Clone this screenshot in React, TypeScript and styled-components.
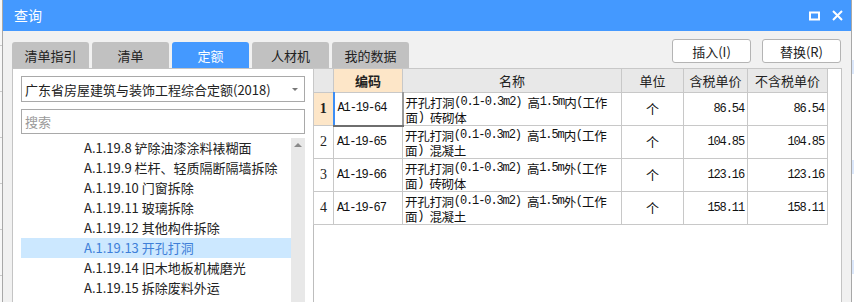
import styled, { createGlobalStyle } from 'styled-components';

type Row = {
	no: number;
	code: string;
	name: [string, string];
	unit: string;
	price: string;
	priceNoTax: string;
};

const rows: Row[] = [
	{ no: 1, code: 'A1-19-64', name: ['开孔打洞(0.1-0.3m2) 高1.5m内(工作', '面) 砖砌体'], unit: '个', price: '86.54', priceNoTax: '86.54' },
	{ no: 2, code: 'A1-19-65', name: ['开孔打洞(0.1-0.3m2) 高1.5m内(工作', '面) 混凝土'], unit: '个', price: '104.85', priceNoTax: '104.85' },
	{ no: 3, code: 'A1-19-66', name: ['开孔打洞(0.1-0.3m2) 高1.5m外(工作', '面) 砖砌体'], unit: '个', price: '123.16', priceNoTax: '123.16' },
	{ no: 4, code: 'A1-19-67', name: ['开孔打洞(0.1-0.3m2) 高1.5m外(工作', '面) 混凝土'], unit: '个', price: '158.11', priceNoTax: '158.11' },
];

const tabs = ['清单指引', '清单', '定额', '人材机', '我的数据'];

const treeItems = [
	'A.1.19.8 铲除油漆涂料裱糊面',
	'A.1.19.9 栏杆、轻质隔断隔墙拆除',
	'A.1.19.10 门窗拆除',
	'A.1.19.11 玻璃拆除',
	'A.1.19.12 其他构件拆除',
	'A.1.19.13 开孔打洞',
	'A.1.19.14 旧木地板机械磨光',
	'A.1.19.15 拆除废料外运',
];

const GlobalStyle = createGlobalStyle`
	html, body {
		margin: 0;
		padding: 0;
		background: #ffffff;
	}
	* {
		box-sizing: border-box;
	}
`;

const Screen = styled.div`
	width: 854px;
	height: 302px;
	overflow: hidden;
	display: flex;
	font-family: 'Noto Sans CJK SC', 'Noto Sans', sans-serif;
	font-size: 13px;
	color: #222;
`;

const BackEdge = styled.div<{ $side: 'left' | 'right' }>`
	width: 3px;
	flex-shrink: 0;
	background: ${(p) =>
		p.$side === 'left'
			? 'repeating-linear-gradient(#f7f7f7 0 45px, #c9c9c9 45px 46px)'
			: 'repeating-linear-gradient(#ffffff 0 60px, #dce8fb 60px 74px, #ffffff 74px 100px)'};
	border-${(p) => (p.$side === 'left' ? 'right' : 'left')}: 1px solid #a8a8a8;
`;

const Dialog = styled.div`
	flex: 1;
	display: flex;
	flex-direction: column;
	background: #f1f1f1;
`;

const TitleBar = styled.div`
	height: 31px;
	flex-shrink: 0;
	background: #4499ff;
	display: flex;
	align-items: center;
	padding: 0 8px 0 11px;
	color: #fff;
	font-size: 14px;
`;

const Title = styled.span`
	flex: 1;
	padding-bottom: 1px;
`;

const TitleButtons = styled.div`
	display: flex;
	gap: 12px;
	align-items: center;
`;

const Body = styled.div`
	flex: 1;
	display: flex;
	flex-direction: column;
	padding: 0 6px 0 9px;
	min-height: 0;
`;

const Toolbar = styled.div`
	height: 37px;
	display: flex;
	justify-content: space-between;
	flex-shrink: 0;
`;

const Tabs = styled.div`
	display: flex;
	gap: 3px;
	align-items: flex-end;
`;

const Tab = styled.div<{ $active?: boolean }>`
	width: 77px;
	height: 26px;
	display: flex;
	align-items: center;
	justify-content: center;
	border-radius: 3px 3px 0 0;
	background: ${(p) => (p.$active ? '#4499ff' : '#c1c1c1')};
	color: ${(p) => (p.$active ? '#fff' : '#222')};
	font-size: 13px;
`;

const Actions = styled.div`
	display: flex;
	gap: 11px;
	padding: 8px 4px 0 0;
`;

const ActionButton = styled.button`
	width: 79px;
	height: 24px;
	border: 1px solid #b4b4b4;
	border-radius: 3px;
	background: #fff;
	font-family: 'Noto Sans CJK SC', 'Noto Sans', sans-serif;
	font-size: 13px;
	color: #222;
	padding: 0;
`;

const Content = styled.div`
	flex: 1;
	display: flex;
	background: #fff;
	border-left: 1px solid #c4c4c4;
	border-top: 1px solid #c4c4c4;
	margin-right: 3px;
	min-height: 0;
`;

const LeftPanel = styled.div`
	width: 300px;
	flex-shrink: 0;
	display: flex;
	flex-direction: column;
	padding: 7px 8px 0 8px;
	gap: 7px;
`;

const Select = styled.div`
	height: 26px;
	border: 1px solid #a9a9a9;
	display: flex;
	align-items: center;
	padding: 0 6px 0 3px;
	font-size: 13px;
	flex-shrink: 0;
`;

const SelectText = styled.span`
	flex: 1;
`;

const Caret = styled.span`
	width: 0;
	height: 0;
	border-left: 3px solid transparent;
	border-right: 3px solid transparent;
	border-top: 3px solid #777;
`;

const Search = styled.div`
	height: 25px;
	border: 1px solid #a9a9a9;
	display: flex;
	align-items: center;
	padding: 0 3px;
	color: #9a9a9a;
	flex-shrink: 0;
`;

const Tree = styled.div`
	flex: 1;
	display: flex;
	margin-top: -3px;
	min-height: 0;
`;

const TreeList = styled.div`
	flex: 1;
	display: flex;
	flex-direction: column;
`;

const TreeItem = styled.div<{ $selected?: boolean }>`
	height: 20px;
	line-height: 20px;
	padding-left: 63px;
	flex-shrink: 0;
	white-space: nowrap;
	background: ${(p) => (p.$selected ? '#cce8ff' : 'transparent')};
	color: ${(p) => (p.$selected ? '#3f7fd8' : '#222')};
`;

const ScrollTrack = styled.div`
	width: 14px;
	background: #e8e8e8;
	display: flex;
	justify-content: center;
	padding-top: 5px;
`;

const ScrollArrow = styled.span`
	width: 0;
	height: 0;
	border-left: 4px solid transparent;
	border-right: 4px solid transparent;
	border-bottom: 4px solid #8a8a8a;
`;

const RightPanel = styled.div`
	flex: 1;
	display: flex;
	border-left: 1px solid #bdbdbd;
	border-right: 1px solid #c4c4c4;
	align-items: flex-start;
`;

const Table = styled.table`
	border-collapse: collapse;
	table-layout: fixed;
	width: 514px;
	margin-top: -1px;
	margin-left: -1px;
`;

const HeadCell = styled.th<{ $highlight?: boolean; $w: number }>`
	width: ${(p) => p.$w}px;
	height: 24px;
	padding: 0;
	background: ${(p) => (p.$highlight ? '#fde6c8' : '#e8e8e8')};
	border: 1px solid #c8c8c8;
	font-weight: ${(p) => (p.$highlight ? 700 : 400)};
	font-size: 13px;
	color: #222;
	text-align: center;
`;

const NumCell = styled.td<{ $current?: boolean }>`
	height: 33px;
	padding: 0;
	text-align: center;
	border: 1px solid #c8c8c8;
	background: ${(p) => (p.$current ? '#fde6c8' : '#fff')};
	font-family: 'Liberation Serif', serif;
	font-weight: ${(p) => (p.$current ? 700 : 400)};
	font-size: 14px;
`;

const Cell = styled.td<{ $align?: 'left' | 'center' | 'right'; $focus?: boolean }>`
	height: 33px;
	padding: ${(p) => (p.$align === 'right' ? '0 3px 0 0' : '0 0 0 3px')};
	text-align: ${(p) => p.$align ?? 'left'};
	border: 1px solid #c8c8c8;
	font-family: 'Liberation Mono', 'Noto Sans CJK SC', monospace;
	font-size: 12px;
	letter-spacing: -1.1px;
	line-height: 15px;
	vertical-align: middle;
	color: #111;
	${(p) =>
		p.$focus &&
		`
		border-left: 2px solid #3d8ef5;
		border-bottom: 2px solid #6e6e6e;
		border-right: 2px solid #9a9a9a;
	`}
`;

const NameCell = styled(Cell)`
	vertical-align: top;
	padding: 2px 0 0 2px;
`;

const Line = styled.div`
	white-space: nowrap;
	height: 15px;
	line-height: 15px;
`;

const Latin = styled.span`
	display: inline-block;
	line-height: 15px;
	vertical-align: top;
`;

const Han = styled.span`
	display: inline-block;
	font-family: 'Noto Sans CJK SC', sans-serif;
	font-size: 12.5px;
	letter-spacing: -0.3px;
	line-height: 15px;
	vertical-align: top;
`;

const UnitCell = styled(Cell)`
	text-align: center;
	padding: 2px 0 0 0;
`;

const UnitText = styled.span`
	font-family: 'Noto Sans CJK SC', sans-serif;
	font-size: 13px;
	letter-spacing: 0;
`;

// split a string into latin and CJK runs so each gets its own font
const Mixed = ({ text }: { text: string }) => (
	<>
		{text.split(/([\x00-\x7F]+)/).map((part, i) =>
			part === '' ? null : /^[\x00-\x7F]+$/.test(part) ? (
				<Latin key={i}>{part.replace(/ /g, '\u00a0')}</Latin>
			) : (
				<Han key={i}>{part}</Han>
			),
		)}
	</>
);

const MaxIcon = () => (
	<svg width="11" height="10" viewBox="0 0 11 10">
		<rect x="1" y="1.5" width="9" height="7" fill="none" stroke="#fff" strokeWidth="2" />
	</svg>
);

const CloseIcon = () => (
	<svg width="11" height="11" viewBox="0 0 11 11">
		<path d="M1 1 L10 10 M10 1 L1 10" stroke="#fff" strokeWidth="2" />
	</svg>
);

const App = () => {
	return (
		<>
			<GlobalStyle />
			<Screen>
				<BackEdge $side="left" />
				<Dialog>
					<TitleBar>
						<Title>查询</Title>
						<TitleButtons>
							<MaxIcon />
							<CloseIcon />
						</TitleButtons>
					</TitleBar>
					<Body>
						<Toolbar>
							<Tabs>
								{tabs.map((t) => (
									<Tab key={t} $active={t === '定额'}>
										{t}
									</Tab>
								))}
							</Tabs>
							<Actions>
								<ActionButton>插入(I)</ActionButton>
								<ActionButton>替换(R)</ActionButton>
							</Actions>
						</Toolbar>
						<Content>
							<LeftPanel>
								<Select>
									<SelectText>广东省房屋建筑与装饰工程综合定额(2018)</SelectText>
									<Caret />
								</Select>
								<Search>搜索</Search>
								<Tree>
									<TreeList>
										{treeItems.map((item) => (
											<TreeItem key={item} $selected={item.includes('开孔打洞')}>
												{item}
											</TreeItem>
										))}
									</TreeList>
									<ScrollTrack>
										<ScrollArrow />
									</ScrollTrack>
								</Tree>
							</LeftPanel>
							<RightPanel>
								<Table>
									<thead>
										<tr>
											<HeadCell $w={20}></HeadCell>
											<HeadCell $w={69} $highlight>
												编码
											</HeadCell>
											<HeadCell $w={219}>名称</HeadCell>
											<HeadCell $w={62}>单位</HeadCell>
											<HeadCell $w={64}>含税单价</HeadCell>
											<HeadCell $w={80}>不含税单价</HeadCell>
										</tr>
									</thead>
									<tbody>
										{rows.map((r) => (
											<tr key={r.code}>
												<NumCell $current={r.no === 1}>{r.no}</NumCell>
												<Cell $focus={r.no === 1}>{r.code}</Cell>
												<NameCell>
													<Line>
														<Mixed text={r.name[0]} />
													</Line>
													<Line>
														<Mixed text={r.name[1]} />
													</Line>
												</NameCell>
												<UnitCell>
													<UnitText>{r.unit}</UnitText>
												</UnitCell>
												<Cell $align="right">{r.price}</Cell>
												<Cell $align="right">{r.priceNoTax}</Cell>
											</tr>
										))}
									</tbody>
								</Table>
							</RightPanel>
						</Content>
					</Body>
				</Dialog>
				<BackEdge $side="right" />
			</Screen>
		</>
	);
};

export default App;
